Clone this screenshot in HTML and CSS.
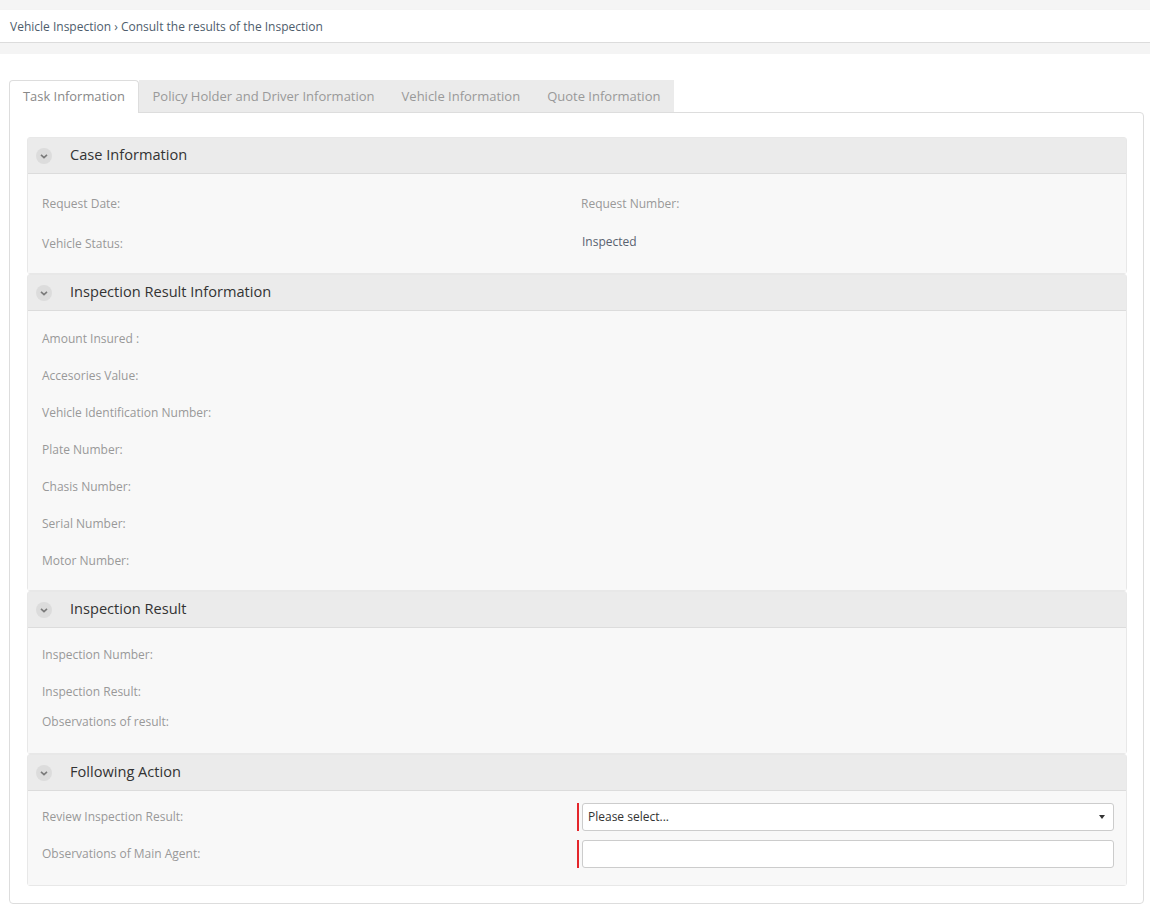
FILE: index.html
```html
<!DOCTYPE html>
<html>
<head>
<meta charset="utf-8">
<link rel="stylesheet" href="styles.css">
</head>
<body>
<div class="topstrip"></div>
<div class="breadcrumb">Vehicle Inspection › Consult the results of the Inspection</div>
<div class="substrip"></div>
<div class="content">
  <div class="tabs">
    <div class="tab active">Task Information</div>
    <div class="tab">Policy Holder and Driver Information</div>
    <div class="tab">Vehicle Information</div>
    <div class="tab">Quote Information</div>
  </div>
  <div class="tabpane">
    <div class="panel">
      <div class="phead"><span class="chev"><svg width="16" height="16" viewBox="0 0 16 16"><circle cx="8" cy="8" r="8" fill="#dcdcdc"/><path d="M5 6.8 L8 9.6 L11 6.8" fill="none" stroke="#7a7a7a" stroke-width="1.6"/></svg></span>Case Information</div>
      <div class="pbody case">
        <div class="grid2 r40">
          <div class="lbl">Request Date:</div>
          <div class="lbl">Request Number:</div>
        </div>
        <div class="grid2 r40">
          <div class="lbl">Vehicle Status:</div>
          <div class="val">Inspected</div>
        </div>
      </div>
    </div>
    <div class="panel">
      <div class="phead"><span class="chev"><svg width="16" height="16" viewBox="0 0 16 16"><circle cx="8" cy="8" r="8" fill="#dcdcdc"/><path d="M5 6.8 L8 9.6 L11 6.8" fill="none" stroke="#7a7a7a" stroke-width="1.6"/></svg></span>Inspection Result Information</div>
      <div class="pbody iri">
        <div class="row r37 lbl">Amount Insured :</div>
        <div class="row r37 lbl">Accesories Value:</div>
        <div class="row r37 lbl">Vehicle Identification Number:</div>
        <div class="row r37 lbl">Plate Number:</div>
        <div class="row r37 lbl">Chasis Number:</div>
        <div class="row r37 lbl">Serial Number:</div>
        <div class="row r37 lbl">Motor Number:</div>
      </div>
    </div>
    <div class="panel">
      <div class="phead"><span class="chev"><svg width="16" height="16" viewBox="0 0 16 16"><circle cx="8" cy="8" r="8" fill="#dcdcdc"/><path d="M5 6.8 L8 9.6 L11 6.8" fill="none" stroke="#7a7a7a" stroke-width="1.6"/></svg></span>Inspection Result</div>
      <div class="pbody ir">
        <div class="row r37 lbl">Inspection Number:</div>
        <div class="row r37 lbl">Inspection Result:</div>
        <div class="row r23 lbl">Observations of result:</div>
      </div>
    </div>
    <div class="panel">
      <div class="phead"><span class="chev"><svg width="16" height="16" viewBox="0 0 16 16"><circle cx="8" cy="8" r="8" fill="#dcdcdc"/><path d="M5 6.8 L8 9.6 L11 6.8" fill="none" stroke="#7a7a7a" stroke-width="1.6"/></svg></span>Following Action</div>
      <div class="pbody fa">
        <div class="grid2 r28">
          <div class="lbl">Review Inspection Result:</div>
          <div class="ctl"><div class="req"></div><div class="select">Please select...<span class="caret"></span></div></div>
        </div>
        <div class="grid2 r28">
          <div class="lbl">Observations of Main Agent:</div>
          <div class="ctl"><div class="req"></div><div class="input"></div></div>
        </div>
      </div>
    </div>
  </div>
</div>
</body>
</html>
```
FILE: styles.css
```css
* { box-sizing: border-box; }
html, body { margin: 0; padding: 0; background: #fff; }
body { font-family: "Open Sans", "Noto Sans", sans-serif; font-size: 12px; color: #999; width: 1150px; }
.topstrip { height: 10px; background: #f5f5f5; }
.breadcrumb { height: 33px; line-height: 34px; padding-left: 10px; font-size: 12px; color: #4e5d6c; background: #fff; border-bottom: 1px solid #dcdcdc; box-shadow: 0 1px 2px rgba(0,0,0,0.08); }
.substrip { height: 11px; background: #f4f4f4; }
.content { padding: 26px 6px 0 9px; }
.tabs { display: flex; height: 33px; }
.tab { height: 32px; line-height: 32px; padding: 0 13.5px; font-size: 13px; color: #999; background: #ebebeb; }
.tab.active { background: #fff; border: 1px solid #ddd; border-bottom: none; border-radius: 4px 4px 0 0; height: 33px; line-height: 31px; padding: 0 13px; font-size: 12.9px; position: relative; z-index: 1; margin-bottom: -1px; color: #888; }
.tabpane { border: 1px solid #ddd; border-radius: 0 4px 4px 4px; margin-top: -1px; padding: 24px 16px 18px 17px; height: 792px; }
.panel { border: 1px solid #e8e8e8; border-radius: 3px; }
.phead { height: 36px; background: #ebebeb; border-bottom: 1px solid #dcdcdc; display: flex; align-items: center; padding-left: 8px; padding-bottom: 3px; font-size: 14.6px; color: #333; }
.chev { width: 16px; height: 16px; margin-right: 18px; display: inline-flex; margin-top: 3px; }
.pbody { background: #f8f8f8; padding: 0 14px; }
.case { padding-top: 10px; padding-bottom: 9px; }
.iri { padding-top: 9px; padding-bottom: 11px; }
.ir { padding-top: 8px; padding-bottom: 20px; }
.fa { padding-top: 12px; padding-bottom: 17px; padding-right: 12px; }
.fa .grid2 + .grid2 { margin-top: 9px; }
.grid2 { display: grid; grid-template-columns: 539px 1fr; align-items: center; }
.row { display: flex; align-items: center; }
.r40 { height: 40px; }
.r37 { height: 37px; }
.r23 { height: 23px; }
.r28 { height: 28px; }
.lbl { font-size: 12px; color: #999; }
.grid2 > .lbl, .grid2 > .val { line-height: 20px; }
.val { font-size: 12px; color: #5a6270; padding-left: 1px; margin-top: -4px; }
.ctl { display: flex; height: 28px; }
.req { width: 2px; height: 28px; background: #e4262b; margin-left: -4px; margin-right: 3px; }
.select, .input { flex: 1; height: 28px; border: 1px solid #ccc; border-radius: 3px; background: #fff; }
.select { position: relative; line-height: 26px; padding-left: 5px; font-size: 12px; color: #333; }
.caret { position: absolute; right: 8px; top: 11px; width: 0; height: 0; border-left: 3px solid transparent; border-right: 3px solid transparent; border-top: 4px solid #333; }
```
